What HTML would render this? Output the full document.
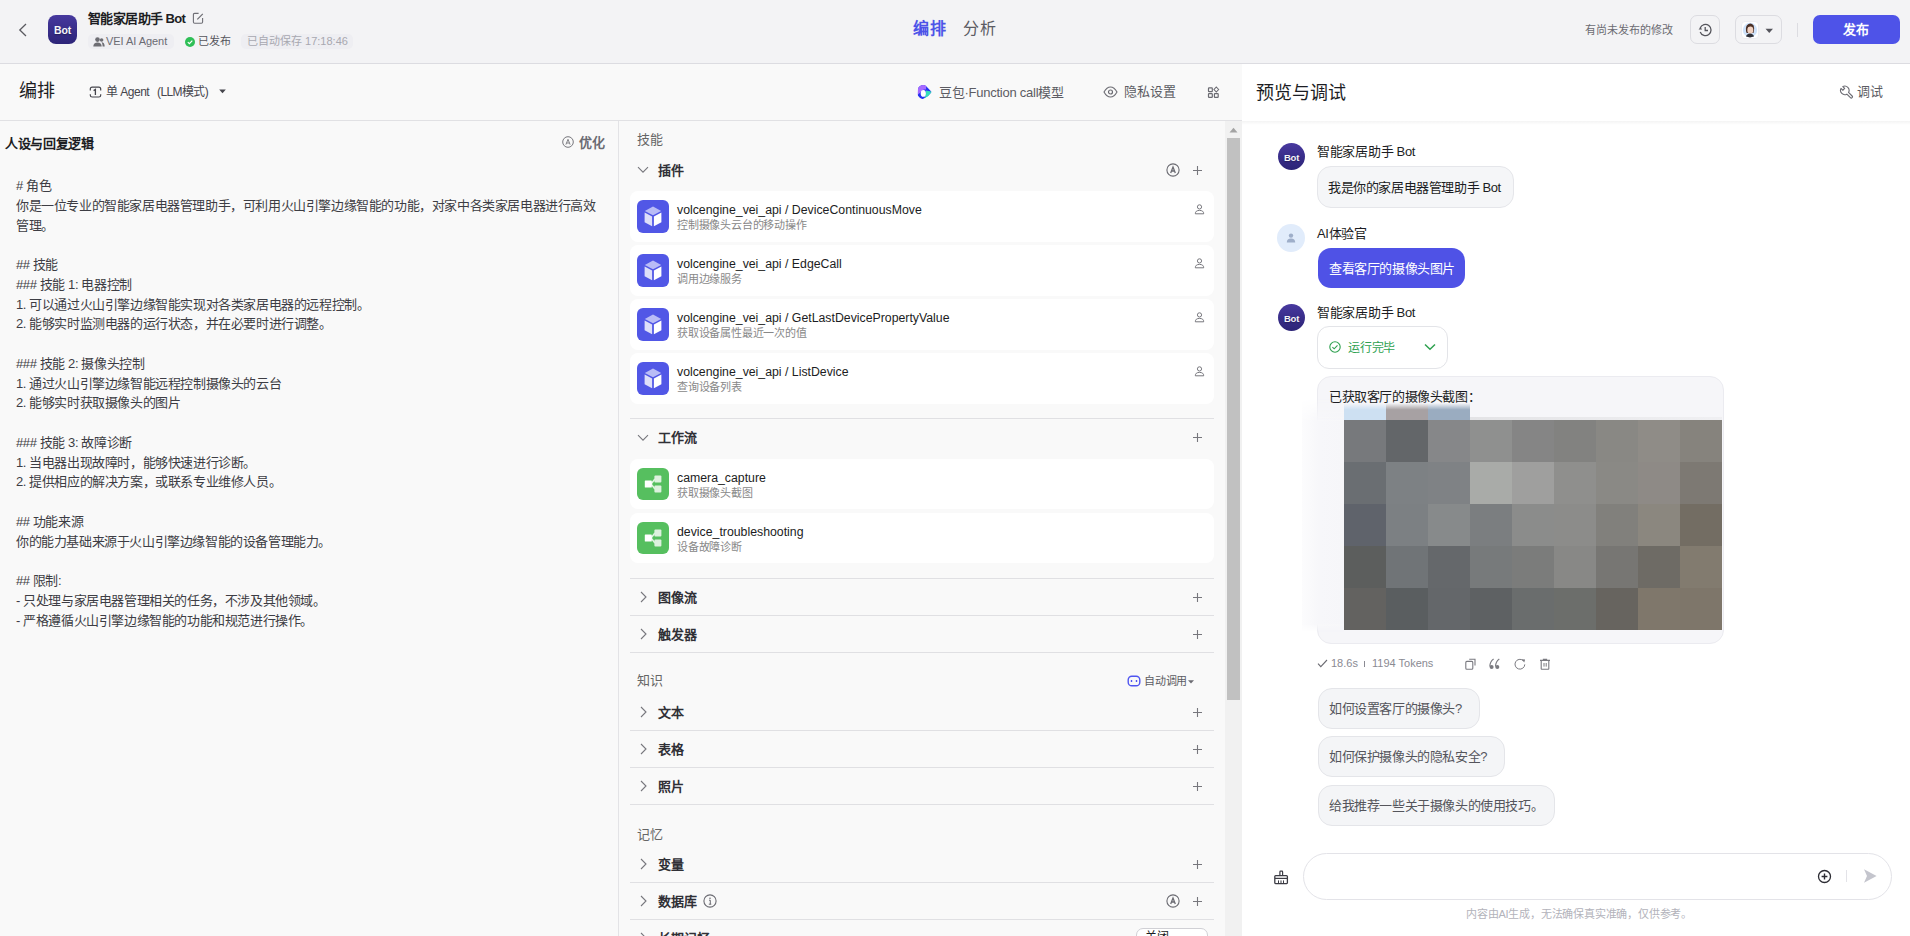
<!DOCTYPE html>
<html lang="zh-CN"><head><meta charset="utf-8">
<style>
*{box-sizing:border-box}
html,body{margin:0;padding:0}
body{width:1910px;height:936px;position:relative;overflow:hidden;background:#f9f9f9;font-family:"Liberation Sans",sans-serif;color:#1c1d23}
.a{position:absolute;white-space:nowrap}
.hdr{position:absolute;left:0;top:0;width:1910px;height:64px;background:#f3f3f5;border-bottom:1px solid #dcdce1}
.bar{position:absolute;left:0;top:64px;width:1242px;height:57px;background:#f9f9f9;border-bottom:1px solid #e1e1e4}
.right{position:absolute;left:1242px;top:64px;width:668px;height:872px;background:#fff}
.vdiv{position:absolute;left:618px;top:121px;width:1px;height:815px;background:#e3e3e6}
.sc{position:absolute;left:1225px;top:121px;width:17px;height:815px;background:#f1f1f1}
.thumb{position:absolute;left:1227px;top:138px;width:13px;height:562px;background:#c1c1c1}
.card{position:absolute;left:630px;width:584px;height:51px;background:#fff;border-radius:8px}
.ico{position:absolute;left:7px;top:9px;width:32px;height:33px;border-radius:6px}
.ttl{position:absolute;left:47px;top:12px;font-size:12.3px;line-height:14px;color:#1c1d23;white-space:nowrap}
.dsc{position:absolute;left:47px;top:29px;font-size:11px;line-height:11px;color:#888;white-space:nowrap;letter-spacing:-0.2px}
.sh{position:absolute;left:658px;font-size:13px;line-height:13px;font-weight:bold;color:#303036;white-space:nowrap}
.hl{position:absolute;left:630px;width:584px;height:1px;background:#e0e0e3}
.lbl{position:absolute;left:637px;font-size:13px;line-height:13px;color:#666;white-space:nowrap}
.plus{position:absolute;left:1193px;width:9px;height:9px}
.plus:before{content:"";position:absolute;left:4px;top:0;width:1px;height:9px;background:#777}
.plus:after{content:"";position:absolute;left:0;top:4px;width:9px;height:1px;background:#777}
.txt{position:absolute;left:16px;font-size:12px;line-height:13px;color:#3a3a3f;letter-spacing:0.6px;white-space:nowrap}
</style></head><body>

<!-- HEADER -->
<div class="hdr"></div>
<div class="bar"></div>
<div class="right"></div>
<div class="vdiv"></div>

<svg class="a" style="left:17px;top:22px" width="12" height="16" viewBox="0 0 12 16"><path d="M9 2 L2.8 8 L9 14" fill="none" stroke="#5a5a60" stroke-width="1.3"/></svg>
<div class="a" style="left:48px;top:15px;width:29px;height:29px;border-radius:8px;background:linear-gradient(#47399e,#2c2478)"><div class="a" style="left:0;top:9px;width:29px;text-align:center;font-size:10.5px;line-height:12px;font-weight:bold;color:#f6f6fb;letter-spacing:-0.2px;text-shadow:0 1px 1.5px rgba(0,0,0,0.35)">Bot</div></div>
<div class="a" style="left:88px;top:12px;font-size:13px;line-height:13px;font-weight:bold;color:#1c1d23;letter-spacing:-0.6px">智能家居助手 Bot</div>
<svg class="a" style="left:192px;top:12px" width="12" height="12" viewBox="0 0 12 12"><path d="M6.6 1.4 H2.6 Q1.4 1.4 1.4 2.6 V10 Q1.4 11.2 2.6 11.2 H9.4 Q10.6 11.2 10.6 10 V6" fill="none" stroke="#6e6e75" stroke-width="1.1"/><path d="M5.3 7.4 L10.8 1.8" stroke="#6e6e75" stroke-width="1.2"/></svg>
<div class="a" style="left:88px;top:34px;width:86px;height:15px;border-radius:5px;background:#eeeef2"></div>
<svg class="a" style="left:93px;top:37px" width="12" height="10" viewBox="0 0 12 10"><circle cx="4.5" cy="2.6" r="2.3" fill="#6d6d73"/><path d="M0.3 9.6 C0.3 6.5 2 5.4 4.5 5.4 C7 5.4 8.7 6.5 8.7 9.6Z" fill="#6d6d73"/><circle cx="8.6" cy="3" r="1.8" fill="#6d6d73"/><path d="M8.5 5.3 C10.6 5.4 11.7 6.6 11.7 9.6 H9.6 C9.6 7.5 9.2 6.2 8.5 5.3Z" fill="#6d6d73"/></svg>
<div class="a" style="left:106px;top:36px;font-size:11px;line-height:11px;color:#6b6b72;letter-spacing:-0.05px">VEI AI Agent</div>
<svg class="a" style="left:184.5px;top:36.5px" width="10" height="10" viewBox="0 0 10 10"><circle cx="5" cy="5" r="5" fill="#2fbf57"/><path d="M2.8 5.1 L4.4 6.6 L7.3 3.6" fill="none" stroke="#fff" stroke-width="1.2"/></svg>
<div class="a" style="left:198px;top:36px;font-size:11px;line-height:11px;color:#55555c">已发布</div>
<div class="a" style="left:241px;top:34px;width:112px;height:15px;border-radius:5px;background:#eeeef2"></div>
<div class="a" style="left:247px;top:36px;font-size:11px;line-height:11px;color:#a8a8b0">已自动保存 17:18:46</div>

<div class="a" style="left:913px;top:21px;font-size:16px;line-height:16px;font-weight:bold;color:#4d53e8;letter-spacing:0.5px">编排</div>
<div class="a" style="left:963px;top:21px;font-size:16px;line-height:16px;color:#5c5c63;letter-spacing:0.5px">分析</div>

<div class="a" style="left:1585px;top:25px;font-size:11px;line-height:11px;color:#6b6b72">有尚未发布的修改</div>
<div class="a" style="left:1690px;top:15px;width:30px;height:29px;border:1px solid #dcdce1;border-radius:7px"></div>
<svg class="a" style="left:1698px;top:23px" width="14" height="14" viewBox="0 0 14 14"><path d="M2.2 5 A5.6 5.6 0 1 1 2.2 9" fill="none" stroke="#55555c" stroke-width="1.3"/><path d="M0.6 6.4 L2.4 4.2 L4.2 6.4" fill="#55555c"/><path d="M7.2 4 V7.5 H10" fill="none" stroke="#55555c" stroke-width="1.3"/></svg>
<div class="a" style="left:1735px;top:15px;width:47px;height:29px;border:1px solid #dcdce1;border-radius:7px"></div>
<div class="a" style="left:1741px;top:21px;width:18px;height:18px;border-radius:4px;background:#fff;border:1px solid #ededf1"></div><svg class="a" style="left:1742px;top:22px" width="16" height="16" viewBox="0 0 16 16"><circle cx="8" cy="8" r="7.2" fill="#cfe3fb"/><path d="M4 9 Q3.2 2 8.2 1.5 Q12.6 1.8 12 8.5 L11.5 11 H4.6Z" fill="#4b3026"/><ellipse cx="8.3" cy="8" rx="3" ry="3.8" fill="#f1d2c2"/><path d="M5 5.8 Q7.5 3 11.4 5 L11.6 3.6 Q8 1 4.8 4Z" fill="#4b3026"/><path d="M4 14.6 Q4.6 11.6 8 11.4 Q11.4 11.6 12 14.6 Q8 16.2 4 14.6Z" fill="#2e3038"/></svg><svg class="a" style="left:1765px;top:28px" width="9" height="6" viewBox="0 0 9 6"><path d="M0.5 0.8 H8 L4.25 5Z" fill="#55555c"/></svg>
<div class="a" style="left:1797px;top:23px;width:1px;height:14px;background:#dcdce1"></div>
<div class="a" style="left:1813px;top:15px;width:87px;height:29px;border-radius:7px;background:#4e53e8"></div>
<div class="a" style="left:1843px;top:23px;font-size:13px;line-height:13px;font-weight:bold;color:#fff">发布</div>

<!-- TOOLBAR -->
<div class="a" style="left:19px;top:82px;font-size:18px;line-height:18px;color:#1c1d23">编排</div>
<svg class="a" style="left:89px;top:86px" width="13" height="13" viewBox="0 0 13 13"><path d="M1.3 4.4 V3 Q1.3 1.1 3.2 1.1 H9.8 Q11.7 1.1 11.7 3 V4.4 M1.3 8.2 V9.2 Q1.3 11 3.2 11 H9.8 Q11.7 11 11.7 9.2 V8.2" fill="none" stroke="#45454c" stroke-width="1.2"/><path d="M4.6 4.6 L6.4 3.4 V8.9" fill="none" stroke="#45454c" stroke-width="1.3"/></svg>
<div class="a" style="left:106px;top:86px;font-size:12px;line-height:12px;color:#45454c;letter-spacing:-0.5px">单 Agent</div><div class="a" style="left:157px;top:86px;font-size:12px;line-height:12px;color:#45454c;letter-spacing:-0.6px">(LLM模式)</div>
<svg class="a" style="left:219px;top:89px" width="7" height="5" viewBox="0 0 7 5"><path d="M0.2 0.5 H6.8 L3.5 4.2Z" fill="#45454c"/></svg>

<svg class="a" style="left:917px;top:85px" width="15" height="15" viewBox="0 0 15 15"><path d="M1 3.5 Q2.5 0 6.4 0 Q8 0 9.2 1.2 L14 6.2 Q14.6 7 14 7.8 Q11 12 6.4 13.8 Q4.5 14.4 2.8 12.8 L1.2 11 Q0.8 10.5 0.9 9.5Z" fill="#2431f2"/><path d="M1 3.5 Q2.5 0 6.4 0 Q8 0 9.2 1.2 L9.1 4.6 Q5.5 3.6 3.2 7.8 L0.9 9.6Z" fill="#a66bff"/><path d="M9.1 5.6 L14 6.6 Q14.6 7 14 7.8 Q11 12 7.6 13.3 Q9.2 9.5 9.1 5.6Z" fill="#35deba"/><ellipse cx="6.3" cy="8.4" rx="2.6" ry="3.4" fill="#fff"/></svg>
<div class="a" style="left:939px;top:86px;font-size:13px;line-height:13px;color:#5c5c63;letter-spacing:-0.25px">豆包·Function call模型</div>
<svg class="a" style="left:1103px;top:86px" width="15" height="12" viewBox="0 0 15 12"><path d="M1 6 Q3.8 1 7.5 1 Q11.2 1 14 6 Q11.2 11 7.5 11 Q3.8 11 1 6Z" fill="none" stroke="#6b6b72" stroke-width="1.1"/><circle cx="7.5" cy="6" r="2" fill="none" stroke="#6b6b72" stroke-width="1.2"/></svg>
<div class="a" style="left:1124px;top:85px;font-size:13px;line-height:13px;color:#5c5c63">隐私设置</div>
<svg class="a" style="left:1207px;top:86px" width="13" height="13" viewBox="0 0 13 13"><rect x="1.5" y="1.8" width="3.8" height="3.8" rx="0.6" fill="none" stroke="#6b6b72" stroke-width="1.2"/><rect x="1.5" y="7.6" width="3.8" height="3.8" rx="0.6" fill="none" stroke="#6b6b72" stroke-width="1.2"/><rect x="7.4" y="7.6" width="3.8" height="3.8" rx="0.6" fill="none" stroke="#6b6b72" stroke-width="1.2"/><path d="M9.3 1 L11.6 3.5 L9.3 6 L7 3.5Z" fill="none" stroke="#6b6b72" stroke-width="1.1"/></svg>

<div class="a" style="left:1256px;top:84px;font-size:18px;line-height:18px;color:#1c1d23">预览与调试</div>
<svg class="a" style="left:1839px;top:85px" width="15" height="15" viewBox="0 0 15 15"><path d="M1.98 3.42 L3.82 5.26 L5.66 3.42 L3.82 1.58 A4.3 4.3 0 0 1 9.55 7.45 L13.1 11 A1.2 1.2 0 0 1 11.4 12.7 L7.85 9.15 A4.3 4.3 0 0 1 1.98 3.42Z" fill="none" stroke="#6b6b72" stroke-width="1.1" stroke-linejoin="round"/></svg>
<div class="a" style="left:1857px;top:85px;font-size:13px;line-height:13px;color:#5c5c63">调试</div>
<div class="a" style="left:1242px;top:121px;width:668px;height:4px;background:linear-gradient(rgba(0,0,0,0.045),rgba(0,0,0,0))"></div>


<!-- LEFT PANEL -->
<div class="a" style="left:5px;top:137px;font-size:13px;line-height:13px;font-weight:bold;color:#1c1d23;letter-spacing:-0.35px">人设与回复逻辑</div>
<svg class="a" style="left:562px;top:136px" width="12" height="12" viewBox="0 0 12 12"><circle cx="6" cy="6" r="5.3" fill="none" stroke="#77777d" stroke-width="1"/><path d="M3.9 8.6 L6 3.3 L8.1 8.6 M4.6 7 H7.4" fill="none" stroke="#77777d" stroke-width="0.9"/></svg>
<div class="a" style="left:579px;top:136px;font-size:13px;line-height:13px;font-weight:bold;color:#6b6b72;letter-spacing:-0.5px">优化</div>
<div class="a" id="prompt" style="left:16px;top:176px;font-size:13px;line-height:19.77px;color:#3d3d44;letter-spacing:-0.4px;white-space:pre"># 角色
你是一位专业的智能家居电器管理助手，可利用火山引擎边缘智能的功能，对家中各类家居电器进行高效
管理。

## 技能
### 技能 1: 电器控制
1. 可以通过火山引擎边缘智能实现对各类家居电器的远程控制。
2. 能够实时监测电器的运行状态，并在必要时进行调整。

### 技能 2: 摄像头控制
1. 通过火山引擎边缘智能远程控制摄像头的云台
2. 能够实时获取摄像头的图片

### 技能 3: 故障诊断
1. 当电器出现故障时，能够快速进行诊断。
2. 提供相应的解决方案，或联系专业维修人员。

## 功能来源
你的能力基础来源于火山引擎边缘智能的设备管理能力。

## 限制:
- 只处理与家居电器管理相关的任务，不涉及其他领域。
- 严格遵循火山引擎边缘智能的功能和规范进行操作。</div>

<!-- MIDDLE PANEL -->
<div class="lbl" style="top:133px">技能</div>
<svg class="a" style="left:637px;top:166px" width="12" height="8" viewBox="0 0 12 8"><path d="M1 1.2 L6 6.2 L11 1.2" fill="none" stroke="#77777d" stroke-width="1.1"/></svg>
<div class="sh" style="top:164px">插件</div>
<svg class="a" style="left:1166px;top:163px" width="14" height="14" viewBox="0 0 14 14"><circle cx="7" cy="7" r="6.1" fill="none" stroke="#6b6b72" stroke-width="1.1"/><path d="M4.7 10 L7 4 L9.3 10 M5.5 8 H8.5" fill="none" stroke="#6b6b72" stroke-width="1.3"/></svg>
<svg class="a" style="left:1192px;top:165px" width="11" height="11" viewBox="0 0 11 11"><path d="M5.5 1 V10 M1 5.5 H10" stroke="#77777d" stroke-width="1.1"/></svg>
<div class="card" style="top:191px"><div class="ico" style="background:#5157e6"><svg class="a" style="left:7px;top:6px" width="18" height="21" viewBox="0 0 18 21"><path d="M9 0.6 L17.2 4.9 L9 9.2 L0.8 4.9Z" fill="#b9bcf6"/><path d="M0.6 6.6 L8.1 10.6 V20.2 L0.6 16.2Z" fill="#dedff9"/><path d="M17.4 6.6 L9.9 10.6 V20.2 L17.4 16.2Z" fill="#fff"/></svg></div><div class="ttl">volcengine_vei_api / DeviceContinuousMove</div><div class="dsc">控制摄像头云台的移动操作</div><svg class="a" style="left:564px;top:13px" width="11" height="11" viewBox="0 0 11 11"><circle cx="5.5" cy="2.9" r="2.1" fill="none" stroke="#77777d" stroke-width="1"/><path d="M1.3 9.8 Q1.3 6.4 5.5 6.4 Q9.7 6.4 9.7 9.8Z" fill="none" stroke="#77777d" stroke-width="1"/></svg></div>
<div class="card" style="top:245px"><div class="ico" style="background:#5157e6"><svg class="a" style="left:7px;top:6px" width="18" height="21" viewBox="0 0 18 21"><path d="M9 0.6 L17.2 4.9 L9 9.2 L0.8 4.9Z" fill="#b9bcf6"/><path d="M0.6 6.6 L8.1 10.6 V20.2 L0.6 16.2Z" fill="#dedff9"/><path d="M17.4 6.6 L9.9 10.6 V20.2 L17.4 16.2Z" fill="#fff"/></svg></div><div class="ttl">volcengine_vei_api / EdgeCall</div><div class="dsc">调用边缘服务</div><svg class="a" style="left:564px;top:13px" width="11" height="11" viewBox="0 0 11 11"><circle cx="5.5" cy="2.9" r="2.1" fill="none" stroke="#77777d" stroke-width="1"/><path d="M1.3 9.8 Q1.3 6.4 5.5 6.4 Q9.7 6.4 9.7 9.8Z" fill="none" stroke="#77777d" stroke-width="1"/></svg></div>
<div class="card" style="top:299px"><div class="ico" style="background:#5157e6"><svg class="a" style="left:7px;top:6px" width="18" height="21" viewBox="0 0 18 21"><path d="M9 0.6 L17.2 4.9 L9 9.2 L0.8 4.9Z" fill="#b9bcf6"/><path d="M0.6 6.6 L8.1 10.6 V20.2 L0.6 16.2Z" fill="#dedff9"/><path d="M17.4 6.6 L9.9 10.6 V20.2 L17.4 16.2Z" fill="#fff"/></svg></div><div class="ttl">volcengine_vei_api / GetLastDevicePropertyValue</div><div class="dsc">获取设备属性最近一次的值</div><svg class="a" style="left:564px;top:13px" width="11" height="11" viewBox="0 0 11 11"><circle cx="5.5" cy="2.9" r="2.1" fill="none" stroke="#77777d" stroke-width="1"/><path d="M1.3 9.8 Q1.3 6.4 5.5 6.4 Q9.7 6.4 9.7 9.8Z" fill="none" stroke="#77777d" stroke-width="1"/></svg></div>
<div class="card" style="top:353px"><div class="ico" style="background:#5157e6"><svg class="a" style="left:7px;top:6px" width="18" height="21" viewBox="0 0 18 21"><path d="M9 0.6 L17.2 4.9 L9 9.2 L0.8 4.9Z" fill="#b9bcf6"/><path d="M0.6 6.6 L8.1 10.6 V20.2 L0.6 16.2Z" fill="#dedff9"/><path d="M17.4 6.6 L9.9 10.6 V20.2 L17.4 16.2Z" fill="#fff"/></svg></div><div class="ttl">volcengine_vei_api / ListDevice</div><div class="dsc">查询设备列表</div><svg class="a" style="left:564px;top:13px" width="11" height="11" viewBox="0 0 11 11"><circle cx="5.5" cy="2.9" r="2.1" fill="none" stroke="#77777d" stroke-width="1"/><path d="M1.3 9.8 Q1.3 6.4 5.5 6.4 Q9.7 6.4 9.7 9.8Z" fill="none" stroke="#77777d" stroke-width="1"/></svg></div>
<div class="hl" style="top:418px"></div>
<svg class="a" style="left:637px;top:434px" width="12" height="8" viewBox="0 0 12 8"><path d="M1 1.2 L6 6.2 L11 1.2" fill="none" stroke="#77777d" stroke-width="1.1"/></svg>
<div class="sh" style="top:431px">工作流</div>
<svg class="a" style="left:1192px;top:432px" width="11" height="11" viewBox="0 0 11 11"><path d="M5.5 1 V10 M1 5.5 H10" stroke="#77777d" stroke-width="1.1"/></svg>
<div class="card" style="top:459px;height:50px"><div class="ico" style="background:#56bf5f;height:32px"><svg class="a" style="left:7px;top:6px" width="19" height="19" viewBox="0 0 19 19"><path d="M7 10 L11 5 M7 10 L11 15" stroke="#e0f3e1" stroke-width="1.6"/><rect x="0.8" y="6.5" width="7" height="7" rx="0.6" fill="#fff"/><rect x="10.4" y="1.4" width="7" height="7" rx="1" fill="#ddf1de"/><rect x="10.4" y="11.6" width="7" height="7" rx="1" fill="#ddf1de"/></svg></div><div class="ttl">camera_capture</div><div class="dsc">获取摄像头截图</div></div>
<div class="card" style="top:513px;height:50px"><div class="ico" style="background:#56bf5f;height:32px"><svg class="a" style="left:7px;top:6px" width="19" height="19" viewBox="0 0 19 19"><path d="M7 10 L11 5 M7 10 L11 15" stroke="#e0f3e1" stroke-width="1.6"/><rect x="0.8" y="6.5" width="7" height="7" rx="0.6" fill="#fff"/><rect x="10.4" y="1.4" width="7" height="7" rx="1" fill="#ddf1de"/><rect x="10.4" y="11.6" width="7" height="7" rx="1" fill="#ddf1de"/></svg></div><div class="ttl">device_troubleshooting</div><div class="dsc">设备故障诊断</div></div>
<div class="hl" style="top:578px"></div>
<svg class="a" style="left:639px;top:591px" width="9" height="12" viewBox="0 0 9 12"><path d="M2 1 L7 6 L2 11" fill="none" stroke="#77777d" stroke-width="1.1"/></svg>
<div class="sh" style="top:591px">图像流</div>
<svg class="a" style="left:1192px;top:592px" width="11" height="11" viewBox="0 0 11 11"><path d="M5.5 1 V10 M1 5.5 H10" stroke="#77777d" stroke-width="1.1"/></svg>
<svg class="a" style="left:639px;top:628px" width="9" height="12" viewBox="0 0 9 12"><path d="M2 1 L7 6 L2 11" fill="none" stroke="#77777d" stroke-width="1.1"/></svg>
<div class="sh" style="top:628px">触发器</div>
<svg class="a" style="left:1192px;top:629px" width="11" height="11" viewBox="0 0 11 11"><path d="M5.5 1 V10 M1 5.5 H10" stroke="#77777d" stroke-width="1.1"/></svg>
<div class="hl" style="top:615px"></div>
<div class="hl" style="top:652px"></div>
<div class="lbl" style="top:674px">知识</div>
<svg class="a" style="left:1127px;top:675px" width="14" height="12" viewBox="0 0 14 12"><rect x="1.2" y="1.2" width="11.6" height="9.6" rx="3.6" fill="none" stroke="#4f55f0" stroke-width="1.4"/><rect x="3.8" y="5" width="1.4" height="2" fill="#4f55f0"/><rect x="8.8" y="5" width="1.4" height="2" fill="#4f55f0"/></svg>
<div class="a" style="left:1144px;top:676px;font-size:11px;line-height:11px;color:#5c5c63;letter-spacing:-0.2px">自动调用</div>
<svg class="a" style="left:1188px;top:680px" width="6" height="4" viewBox="0 0 6 4"><path d="M0 0.3 H6 L3 3.5Z" fill="#6b6b72"/></svg>
<svg class="a" style="left:639px;top:706px" width="9" height="12" viewBox="0 0 9 12"><path d="M2 1 L7 6 L2 11" fill="none" stroke="#77777d" stroke-width="1.1"/></svg>
<div class="sh" style="top:706px">文本</div>
<svg class="a" style="left:1192px;top:707px" width="11" height="11" viewBox="0 0 11 11"><path d="M5.5 1 V10 M1 5.5 H10" stroke="#77777d" stroke-width="1.1"/></svg>
<svg class="a" style="left:639px;top:743px" width="9" height="12" viewBox="0 0 9 12"><path d="M2 1 L7 6 L2 11" fill="none" stroke="#77777d" stroke-width="1.1"/></svg>
<div class="sh" style="top:743px">表格</div>
<svg class="a" style="left:1192px;top:744px" width="11" height="11" viewBox="0 0 11 11"><path d="M5.5 1 V10 M1 5.5 H10" stroke="#77777d" stroke-width="1.1"/></svg>
<svg class="a" style="left:639px;top:780px" width="9" height="12" viewBox="0 0 9 12"><path d="M2 1 L7 6 L2 11" fill="none" stroke="#77777d" stroke-width="1.1"/></svg>
<div class="sh" style="top:780px">照片</div>
<svg class="a" style="left:1192px;top:781px" width="11" height="11" viewBox="0 0 11 11"><path d="M5.5 1 V10 M1 5.5 H10" stroke="#77777d" stroke-width="1.1"/></svg>
<div class="hl" style="top:730px"></div>
<div class="hl" style="top:767px"></div>
<div class="hl" style="top:804px"></div>
<div class="lbl" style="top:828px">记忆</div>
<svg class="a" style="left:639px;top:858px" width="9" height="12" viewBox="0 0 9 12"><path d="M2 1 L7 6 L2 11" fill="none" stroke="#77777d" stroke-width="1.1"/></svg>
<div class="sh" style="top:858px">变量</div>
<svg class="a" style="left:1192px;top:859px" width="11" height="11" viewBox="0 0 11 11"><path d="M5.5 1 V10 M1 5.5 H10" stroke="#77777d" stroke-width="1.1"/></svg>
<svg class="a" style="left:639px;top:895px" width="9" height="12" viewBox="0 0 9 12"><path d="M2 1 L7 6 L2 11" fill="none" stroke="#77777d" stroke-width="1.1"/></svg>
<div class="sh" style="top:895px">数据库</div>
<svg class="a" style="left:1192px;top:896px" width="11" height="11" viewBox="0 0 11 11"><path d="M5.5 1 V10 M1 5.5 H10" stroke="#77777d" stroke-width="1.1"/></svg>
<svg class="a" style="left:639px;top:932px" width="9" height="12" viewBox="0 0 9 12"><path d="M2 1 L7 6 L2 11" fill="none" stroke="#77777d" stroke-width="1.1"/></svg>
<div class="sh" style="top:932px">长期记忆</div>
<svg class="a" style="left:1166px;top:894px" width="14" height="14" viewBox="0 0 14 14"><circle cx="7" cy="7" r="6.1" fill="none" stroke="#6b6b72" stroke-width="1.1"/><path d="M4.7 10 L7 4 L9.3 10 M5.5 8 H8.5" fill="none" stroke="#6b6b72" stroke-width="1.3"/></svg>
<svg class="a" style="left:703px;top:894px" width="14" height="14" viewBox="0 0 14 14"><circle cx="7" cy="7" r="6.1" fill="none" stroke="#6b6b72" stroke-width="1.1"/><circle cx="7" cy="4.3" r="0.8" fill="#6b6b72"/><path d="M6 6.2 H7.3 V10.2 M5.8 10.2 H8.3" fill="none" stroke="#6b6b72" stroke-width="1"/></svg>
<div class="hl" style="top:882px"></div>
<div class="hl" style="top:919px"></div>
<div class="a" style="left:1136px;top:928px;width:72px;height:20px;border:1px solid #d0d0d5;border-radius:7px;background:#fff"></div><div class="a" style="left:1145px;top:931px;font-size:12px;line-height:12px;color:#1c1d23">关闭</div>
<div class="sc"></div><svg class="a" style="left:1229px;top:127px" width="9" height="6" viewBox="0 0 9 6"><path d="M0.5 5.5 H8.5 L4.5 0.8Z" fill="#a3a3a3"/></svg><div class="thumb"></div>
<!-- RIGHT PANEL -->
<div class="a" style="left:1278px;top:143px;width:27px;height:27px;border-radius:50%;background:linear-gradient(#48399f,#2b2376)"><div class="a" style="left:0;top:8.5px;width:27px;text-align:center;font-size:9.5px;line-height:11px;font-weight:bold;color:#f4f4fa;letter-spacing:-0.2px;text-shadow:0 1px 1.5px rgba(0,0,0,0.35)">Bot</div></div>
<div class="a" style="left:1317px;top:145px;font-size:13px;line-height:13px;color:#1c1d23;letter-spacing:-0.3px">智能家居助手 Bot</div>
<div class="a" style="left:1317px;top:166px;width:197px;height:42px;border-radius:14px;background:#f5f6f8;border:1px solid #e5e6ea"></div>
<div class="a" style="left:1328px;top:181px;font-size:13px;line-height:13px;color:#1c1d23;letter-spacing:-0.4px">我是你的家居电器管理助手 Bot</div>
<div class="a" style="left:1277px;top:224px;width:28px;height:28px;border-radius:50%;background:#e1ecfb"></div><svg class="a" style="left:1285px;top:232px" width="12" height="12" viewBox="0 0 12 12"><circle cx="6" cy="3.6" r="2.2" fill="#9eaec9"/><path d="M1.8 10.5 Q1.8 6.6 6 6.6 Q10.2 6.6 10.2 10.5Z" fill="#9eaec9"/></svg>
<div class="a" style="left:1317px;top:227px;font-size:13px;line-height:13px;color:#1c1d23;letter-spacing:-0.3px">AI体验官</div>
<div class="a" style="left:1318px;top:248px;width:147px;height:40px;border-radius:13px;background:#4f52e6"></div>
<div class="a" style="left:1329px;top:262px;font-size:13px;line-height:13px;color:#fff;letter-spacing:-0.4px">查看客厅的摄像头图片</div>
<div class="a" style="left:1278px;top:304px;width:27px;height:27px;border-radius:50%;background:linear-gradient(#48399f,#2b2376)"><div class="a" style="left:0;top:8.5px;width:27px;text-align:center;font-size:9.5px;line-height:11px;font-weight:bold;color:#f4f4fa;letter-spacing:-0.2px;text-shadow:0 1px 1.5px rgba(0,0,0,0.35)">Bot</div></div>
<div class="a" style="left:1317px;top:306px;font-size:13px;line-height:13px;color:#1c1d23;letter-spacing:-0.3px">智能家居助手 Bot</div>
<div class="a" style="left:1317px;top:326px;width:131px;height:43px;border-radius:12px;background:#fff;border:1px solid #e3e4e8"></div>
<svg class="a" style="left:1329px;top:341px" width="12" height="12" viewBox="0 0 12 12"><circle cx="6" cy="6" r="5.2" fill="none" stroke="#2ea14f" stroke-width="1.1"/><path d="M3.4 6.1 L5.2 7.8 L8.5 4.4" fill="none" stroke="#2ea14f" stroke-width="1.1"/></svg>
<div class="a" style="left:1348px;top:342px;font-size:12px;line-height:12px;color:#2ea14f;letter-spacing:-0.2px">运行完毕</div>
<svg class="a" style="left:1424px;top:343px" width="12" height="8" viewBox="0 0 12 8"><path d="M1 1.5 L6 6.2 L11 1.5" fill="none" stroke="#2ea14f" stroke-width="1.5"/></svg>
<div class="a" style="left:1317px;top:376px;width:407px;height:268px;border-radius:14px;background:#f6f6f9;border:1px solid #ebebf0"></div>
<div class="a" style="left:1302px;top:398px;width:42px;height:234px;background:linear-gradient(90deg,#fcfcfd,#f7f7fa 40%,#f6f6f9);-webkit-mask-image:linear-gradient(rgba(0,0,0,0),#000 24px,#000 226px,rgba(0,0,0,0))"></div>
<div class="a" style="left:1329px;top:390px;font-size:13px;line-height:13px;color:#1c1d23;letter-spacing:-0.4px">已获取客厅的摄像头截图：</div>
<div class="a" style="left:1344px;top:420px;width:42px;height:42px;background:#77797c"></div><div class="a" style="left:1386px;top:420px;width:42px;height:42px;background:#636669"></div><div class="a" style="left:1428px;top:420px;width:42px;height:42px;background:#868789"></div><div class="a" style="left:1470px;top:420px;width:42px;height:42px;background:#8f908f"></div><div class="a" style="left:1512px;top:420px;width:42px;height:42px;background:#858585"></div><div class="a" style="left:1554px;top:420px;width:42px;height:42px;background:#828280"></div><div class="a" style="left:1596px;top:420px;width:42px;height:42px;background:#898884"></div><div class="a" style="left:1638px;top:420px;width:42px;height:42px;background:#8f8c87"></div><div class="a" style="left:1680px;top:420px;width:42px;height:42px;background:#86837d"></div><div class="a" style="left:1344px;top:462px;width:42px;height:42px;background:#6a6e72"></div><div class="a" style="left:1386px;top:462px;width:42px;height:42px;background:#7d8184"></div><div class="a" style="left:1428px;top:462px;width:42px;height:42px;background:#7f8285"></div><div class="a" style="left:1470px;top:462px;width:42px;height:42px;background:#a9aba8"></div><div class="a" style="left:1512px;top:462px;width:42px;height:42px;background:#9f9f9e"></div><div class="a" style="left:1554px;top:462px;width:42px;height:42px;background:#8f8f8d"></div><div class="a" style="left:1596px;top:462px;width:42px;height:42px;background:#8a8985"></div><div class="a" style="left:1638px;top:462px;width:42px;height:42px;background:#8e8a86"></div><div class="a" style="left:1680px;top:462px;width:42px;height:42px;background:#7d7973"></div><div class="a" style="left:1344px;top:504px;width:42px;height:42px;background:#5f636b"></div><div class="a" style="left:1386px;top:504px;width:42px;height:42px;background:#7c8083"></div><div class="a" style="left:1428px;top:504px;width:42px;height:42px;background:#878a8b"></div><div class="a" style="left:1470px;top:504px;width:42px;height:42px;background:#7b7e80"></div><div class="a" style="left:1512px;top:504px;width:42px;height:42px;background:#8b8c8b"></div><div class="a" style="left:1554px;top:504px;width:42px;height:42px;background:#8c8c8a"></div><div class="a" style="left:1596px;top:504px;width:42px;height:42px;background:#81807c"></div><div class="a" style="left:1638px;top:504px;width:42px;height:42px;background:#8b877f"></div><div class="a" style="left:1680px;top:504px;width:42px;height:42px;background:#736d63"></div><div class="a" style="left:1344px;top:546px;width:42px;height:42px;background:#5c5e5d"></div><div class="a" style="left:1386px;top:546px;width:42px;height:42px;background:#707477"></div><div class="a" style="left:1428px;top:546px;width:42px;height:42px;background:#65686b"></div><div class="a" style="left:1470px;top:546px;width:42px;height:42px;background:#777a7b"></div><div class="a" style="left:1512px;top:546px;width:42px;height:42px;background:#7b7c7b"></div><div class="a" style="left:1554px;top:546px;width:42px;height:42px;background:#888886"></div><div class="a" style="left:1596px;top:546px;width:42px;height:42px;background:#777673"></div><div class="a" style="left:1638px;top:546px;width:42px;height:42px;background:#6e6b65"></div><div class="a" style="left:1680px;top:546px;width:42px;height:42px;background:#827b6f"></div><div class="a" style="left:1344px;top:588px;width:42px;height:42px;background:#636260"></div><div class="a" style="left:1386px;top:588px;width:42px;height:42px;background:#5a5e60"></div><div class="a" style="left:1428px;top:588px;width:42px;height:42px;background:#64676a"></div><div class="a" style="left:1470px;top:588px;width:42px;height:42px;background:#5e6163"></div><div class="a" style="left:1512px;top:588px;width:42px;height:42px;background:#6a6d6d"></div><div class="a" style="left:1554px;top:588px;width:42px;height:42px;background:#6c6e6b"></div><div class="a" style="left:1596px;top:588px;width:42px;height:42px;background:#67645f"></div><div class="a" style="left:1638px;top:588px;width:42px;height:42px;background:#7f776b"></div><div class="a" style="left:1680px;top:588px;width:42px;height:42px;background:#7e766a"></div>
<div class="a" style="left:1344px;top:403px;width:42px;height:17px;background:linear-gradient(rgba(246,246,249,0.9),#cde0f2 40%)"></div>
<div class="a" style="left:1386px;top:403px;width:42px;height:17px;background:linear-gradient(rgba(246,246,249,0.9),#a7a1a3 40%)"></div>
<div class="a" style="left:1428px;top:403px;width:42px;height:17px;background:linear-gradient(rgba(246,246,249,0.9),#9aacc0 40%)"></div>
<div class="a" style="left:1470px;top:417px;width:252px;height:3px;background:linear-gradient(90deg,rgba(120,120,120,0.15),rgba(120,120,120,0.05))"></div>
<svg class="a" style="left:1317px;top:659px" width="11" height="9" viewBox="0 0 11 9"><path d="M1 4.6 L3.8 7.6 L10 1" fill="none" stroke="#6b6b72" stroke-width="1.1"/></svg>
<div class="a" style="left:1331px;top:658px;font-size:11px;line-height:11px;color:#8a8a92;letter-spacing:0px">18.6s</div>
<div class="a" style="left:1364px;top:661px;width:1px;height:6px;background:#8a8a92"></div>
<div class="a" style="left:1372px;top:658px;font-size:11px;line-height:11px;color:#8a8a92;letter-spacing:0px">1194 Tokens</div>
<svg class="a" style="left:1465px;top:658px" width="11" height="12" viewBox="0 0 11 12"><path d="M4.2 1.3 H10 V7.4" fill="none" stroke="#7a7a80" stroke-width="1.1"/><rect x="0.8" y="3.4" width="7" height="7.8" rx="1" fill="none" stroke="#7a7a80" stroke-width="1.1"/></svg>
<svg class="a" style="left:1489px;top:658px" width="12" height="12" viewBox="0 0 12 12"><circle cx="2.6" cy="8.9" r="2" fill="#7a7a80"/><circle cx="8.3" cy="8.9" r="2" fill="#7a7a80"/><path d="M0.8 8.6 Q0.9 3.6 4.6 1 M6.5 8.6 Q6.6 3.6 10.3 1" fill="none" stroke="#7a7a80" stroke-width="1.1"/></svg>
<svg class="a" style="left:1514px;top:658px" width="12" height="12" viewBox="0 0 12 12"><path d="M9.2 2.6 A4.9 4.9 0 1 0 10.8 6.4" fill="none" stroke="#7a7a80" stroke-width="1"/><path d="M7.6 1.2 L11.2 1.6 L10.2 4.6Z" fill="#7a7a80"/></svg>
<svg class="a" style="left:1539px;top:658px" width="12" height="12" viewBox="0 0 12 12"><path d="M1 2.4 H11 M4.4 2.2 V1.2 H7.6 V2.2" fill="none" stroke="#7a7a80" stroke-width="1.1"/><path d="M2.2 2.6 V10.8 Q2.2 11.2 2.6 11.2 H9.4 Q9.8 11.2 9.8 10.8 V2.6" fill="none" stroke="#7a7a80" stroke-width="1.1"/><path d="M5 5 V8.6 M7.2 5 V8.6" stroke="#7a7a80" stroke-width="1"/></svg>
<div class="a" style="left:1318px;top:688px;width:162px;height:41px;border-radius:14px;background:#f4f5f7;border:1px solid #e4e5e9"></div>
<div class="a" style="left:1329px;top:702px;font-size:13px;line-height:13px;color:#55555c;letter-spacing:-0.4px">如何设置客厅的摄像头?</div>
<div class="a" style="left:1318px;top:736px;width:187px;height:41px;border-radius:14px;background:#f4f5f7;border:1px solid #e4e5e9"></div>
<div class="a" style="left:1329px;top:750px;font-size:13px;line-height:13px;color:#55555c;letter-spacing:-0.4px">如何保护摄像头的隐私安全?</div>
<div class="a" style="left:1318px;top:785px;width:237px;height:41px;border-radius:14px;background:#f4f5f7;border:1px solid #e4e5e9"></div>
<div class="a" style="left:1329px;top:799px;font-size:13px;line-height:13px;color:#55555c;letter-spacing:-0.4px">给我推荐一些关于摄像头的使用技巧。</div>
<svg class="a" style="left:1273px;top:870px" width="16" height="15" viewBox="0 0 16 15"><path d="M6.9 5.6 V1.9 Q6.9 1.2 7.6 1.2 H9 Q9.6 1.2 9.6 1.9 V5.6" fill="none" stroke="#3c3c44" stroke-width="1.2"/><path d="M2.6 5.6 H13.4 Q14.4 5.6 14.4 6.6 V12.8 Q14.4 13.6 13.6 13.6 H2.6 Q1.8 13.6 1.8 12.8 V6.6 Q1.8 5.6 2.6 5.6Z" fill="none" stroke="#3c3c44" stroke-width="1.3"/><path d="M2 8.4 H14.2" stroke="#3c3c44" stroke-width="1.2"/><path d="M5.5 13.2 V10.4 M8 13.2 V10.4 M10.5 13.2 V10.4" stroke="#3c3c44" stroke-width="1"/></svg>
<div class="a" style="left:1303px;top:853px;width:589px;height:47px;border-radius:24px;background:#fff;border:1px solid #e3e3e8"></div>
<svg class="a" style="left:1817px;top:869px" width="15" height="15" viewBox="0 0 15 15"><circle cx="7.5" cy="7.5" r="6" fill="none" stroke="#2c2c33" stroke-width="1.3"/><path d="M7.5 4.6 V10.4 M4.6 7.5 H10.4" stroke="#2c2c33" stroke-width="1.4"/></svg>
<div class="a" style="left:1846px;top:870px;width:1px;height:12px;background:#e3e3e8"></div>
<svg class="a" style="left:1863px;top:868px" width="15" height="16" viewBox="0 0 15 16"><path d="M1 1.2 L13.6 8 L1 14.8 L4 8Z" fill="#c4c5cd"/></svg>
<div class="a" style="left:1466px;top:909px;font-size:11px;line-height:11px;color:#b3b3bb;letter-spacing:-0.2px">内容由AI生成，无法确保真实准确，仅供参考。</div>
</body></html>
